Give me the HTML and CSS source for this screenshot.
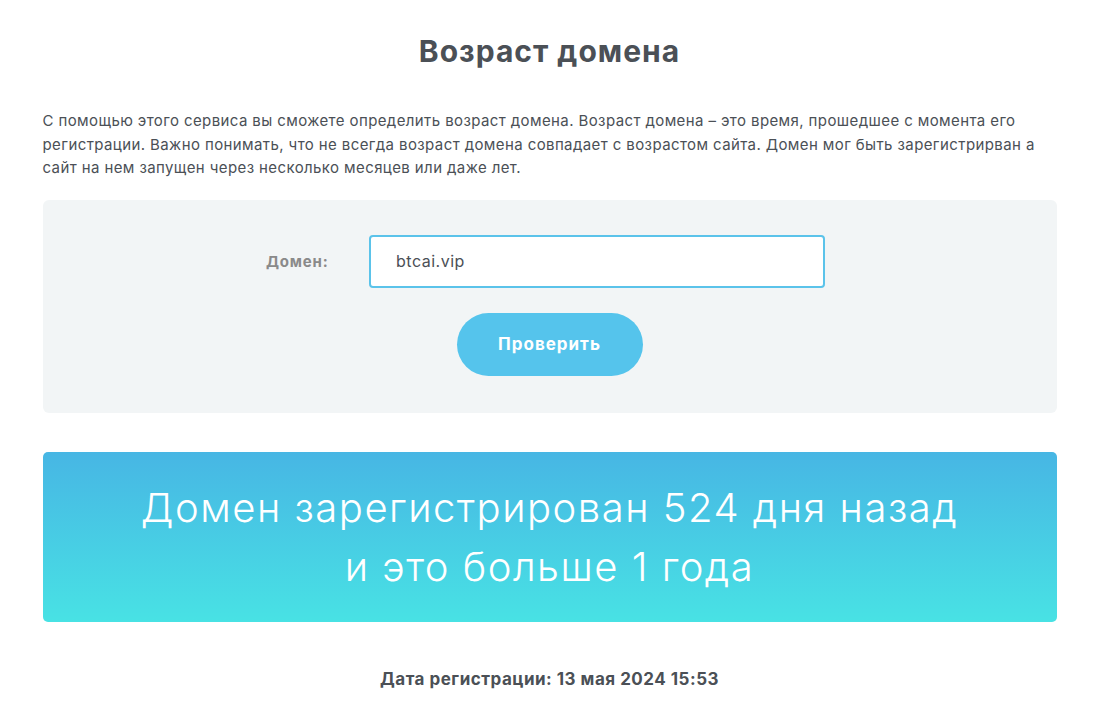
FILE: index.html
```html
<!DOCTYPE html>
<html lang="ru">
<head>
  <meta charset="UTF-8" />
  <meta name="viewport" content="width=device-width, initial-scale=1" />
  <title>Возраст домена</title>
  <link rel="stylesheet" href="styles.css">
</head>
<body>
  <div class="page">
    <h1>Возраст домена</h1>

    <p class="intro">С помощью этого сервиса вы сможете определить возраст домена. Возраст домена – это время, прошедшее с момента его регистрации. Важно понимать, что не всегда возраст домена совпадает с возрастом сайта. Домен мог быть зарегистрирван а сайт на нем запущен через несколько месяцев или даже лет.</p>

    <form class="check-form">
      <div class="row">
        <label for="domain">Домен:</label>
        <input type="text" id="domain" value="btcai.vip" />
      </div>
      <button type="button">Проверить</button>
    </form>

    <div class="result">
      Домен зарегистрирован 524 дня назад<br>
      и это больше 1 года
    </div>

    <div class="reg-date">Дата регистрации: 13 мая 2024 15:53</div>
  </div>
</body>
</html>
```

FILE: styles.css
```css
body {
  font-family: "Inter", "Noto Sans", sans-serif;
  background: #fff;
  color: #4b5056;
  margin: 0;
}
.page {
  width: 1014px;
  margin: 0 auto;
}
h1 {
  text-align: center;
  font-size: 30px;
  letter-spacing: 1px;
  font-weight: 700;
  margin: 0;
  padding-top: 32px;
  line-height: 38px;
}
.intro {
  font-size: 15px;
  letter-spacing: 0.4px;
  line-height: 23.5px;
  margin: 39px 0 20px;
}
.check-form {
  background: #f2f5f6;
  border-radius: 6px;
  padding: 35px 0 37px;
  display: flex;
  flex-direction: column;
  align-items: center;
  gap: 25px;
}
.row {
  display: flex;
  align-items: center;
  margin-left: -8px;
}
label {
  font-size: 15px;
  letter-spacing: 0.8px;
  font-weight: 700;
  color: #8a8a8a;
  width: 103px;
}
input {
  width: 456px;
  height: 53px;
  box-sizing: border-box;
  padding: 0 25px;
  font-family: inherit;
  font-size: 16px;
  letter-spacing: 0.5px;
  color: #4b5056;
  border: 2px solid #5bc3ea;
  border-radius: 4px;
  background: #fff;
}
button {
  width: 186px;
  height: 63px;
  border: none;
  border-radius: 32px;
  background: #55c4ec;
  color: #fff;
  font-family: inherit;
  font-size: 17px;
  letter-spacing: 1px;
  font-weight: 700;
  cursor: pointer;
}
.result {
  margin-top: 39px;
  height: 170px;
  box-sizing: border-box;
  padding-top: 26px;
  border-radius: 5px;
  background: linear-gradient(#47b6e4, #48e2e4);
  color: #fff;
  text-align: center;
  font-size: 40px;
  letter-spacing: 1.5px;
  font-weight: 300;
  line-height: 59px;
}
.reg-date {
  text-align: center;
  font-size: 17px;
  letter-spacing: 0.5px;
  font-weight: 700;
  margin-top: 47px;
}
```
